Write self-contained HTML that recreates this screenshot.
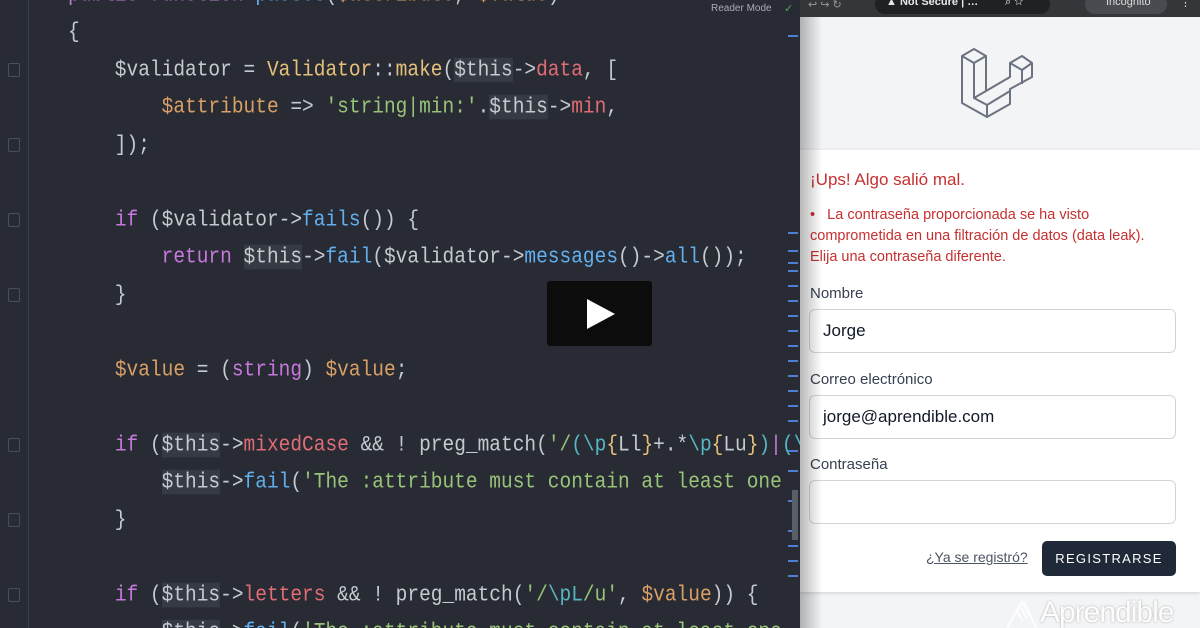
<!DOCTYPE html>
<html><head><meta charset="utf-8"><style>
*{margin:0;padding:0;box-sizing:border-box}
body{width:1200px;height:628px;overflow:hidden;background:#282c34;position:relative;font-family:"Liberation Sans",sans-serif}
.code{position:absolute;left:0;top:0;width:800px;height:628px;background:#282b33;overflow:hidden}
.ln{position:absolute;left:68px;white-space:pre;font-family:"Liberation Mono",monospace;font-size:19.5px;color:#c5c9d0;line-height:24px;transform:scaleY(1.12);transform-origin:0 50%}
.k{color:#c678dd}.f{color:#61afef}.s{color:#98c379}.v{color:#d8a066}.r{color:#e06c75}.y{color:#e5c07b}.c{color:#56b6c2}
.hl{background:#363a43}
.gut{position:absolute;left:28px;top:0;width:1px;height:628px;background:#3a3e47}
.fold{position:absolute;left:8px;width:12px;height:14px;border:1px solid #4a4e57;border-radius:2px;background:#282b33}
.mk{position:absolute;left:788px;width:10px;height:2px;background:#4f7fd6}
.right{position:absolute;left:800px;top:0;width:400px;height:628px;background:#f3f4f6;overflow:hidden}
.tb{position:absolute;left:0;top:0;width:400px;height:17px;background:#35363a;color:#e8e8e8;font-size:11px}
.card{position:absolute;left:0;top:150px;width:400px;height:442px;background:#fff;box-shadow:0 1px 4px rgba(0,0,0,.15)}
.shade{position:absolute;left:0;top:17px;width:22px;height:611px;background:linear-gradient(to right,rgba(0,0,0,.28),rgba(0,0,0,0))}
.lbl{position:absolute;left:10px;font-size:15px;color:#374151}
.inp{position:absolute;left:9px;width:367px;height:44px;border:1px solid #d1d5db;border-radius:6px;background:#fff;font-size:17px;color:#111827;padding:11px 13px}
.err{color:#c53030;position:absolute;left:10px}
</style></head><body>
<div class="code">
<div class="gut"></div>
<div class="fold" style="top:63px"></div>
<div class="fold" style="top:138px"></div>
<div class="fold" style="top:213px"></div>
<div class="fold" style="top:288px"></div>
<div class="fold" style="top:438px"></div>
<div class="fold" style="top:513px"></div>
<div class="fold" style="top:588px"></div>
<div class="ln" style="top:-17px"><span class="k">public function</span> <span class="f">passes</span>(<span class="v">$attribute</span>, <span class="v">$value</span>)</div>
<div class="ln" style="top:20px">{</div>
<div class="ln" style="top:58px">    $validator = <span class="y">Validator</span>::<span class="y">make</span>(<span class="hl">$this</span>-&gt;<span class="r">data</span>, [</div>
<div class="ln" style="top:95px">        <span class="v">$attribute</span> =&gt; <span class="s">'string|min:'</span>.<span class="hl">$this</span>-&gt;<span class="r">min</span>,</div>
<div class="ln" style="top:133px">    ]);</div>
<div class="ln" style="top:208px">    <span class="k">if</span> ($validator-&gt;<span class="f">fails</span>()) {</div>
<div class="ln" style="top:245px">        <span class="k">return</span> <span class="hl">$this</span>-&gt;<span class="f">fail</span>($validator-&gt;<span class="f">messages</span>()-&gt;<span class="f">all</span>());</div>
<div class="ln" style="top:283px">    }</div>
<div class="ln" style="top:358px">    <span class="v">$value</span> = (<span class="k">string</span>) <span class="v">$value</span>;</div>
<div class="ln" style="top:433px">    <span class="k">if</span> (<span class="hl">$this</span>-&gt;<span class="r">mixedCase</span> &amp;&amp; ! preg_match(<span class="s">'/</span><span class="c">(\p</span><span class="y">{</span>Ll<span class="y">}</span>+.*<span class="c">\p</span><span class="y">{</span>Lu<span class="y">}</span><span class="c">)</span><span class="k">|</span><span class="c">(\</span></div>
<div class="ln" style="top:470px">        <span class="hl">$this</span>-&gt;<span class="f">fail</span>(<span class="s">'The :attribute must contain at least one </span></div>
<div class="ln" style="top:508px">    }</div>
<div class="ln" style="top:583px">    <span class="k">if</span> (<span class="hl">$this</span>-&gt;<span class="r">letters</span> &amp;&amp; ! preg_match(<span class="s">'/</span><span class="c">\pL</span><span class="s">/u'</span>, <span class="v">$value</span>)) {</div>
<div class="ln" style="top:620px">        <span class="hl">$this</span>-&gt;<span class="f">fail</span>(<span class="s">'The :attribute must contain at least one</span></div>
<div style="position:absolute;left:711px;top:3px;font-size:10px;color:#aab">Reader Mode</div>
<div style="position:absolute;left:784px;top:2px;font-size:11px;color:#4caf50">✓</div>
<div class="mk" style="top:35px"></div><div class="mk" style="top:232px"></div><div class="mk" style="top:250px"></div>
<div class="mk" style="top:262px"></div><div class="mk" style="top:270px"></div><div class="mk" style="top:285px"></div>
<div class="mk" style="top:300px"></div><div class="mk" style="top:315px"></div><div class="mk" style="top:330px"></div>
<div class="mk" style="top:345px"></div><div class="mk" style="top:360px"></div><div class="mk" style="top:375px"></div>
<div class="mk" style="top:390px"></div><div class="mk" style="top:405px"></div><div class="mk" style="top:420px"></div>
<div class="mk" style="top:450px"></div><div class="mk" style="top:470px"></div><div class="mk" style="top:500px"></div>
<div class="mk" style="top:530px"></div><div class="mk" style="top:545px"></div><div class="mk" style="top:560px"></div>
<div class="mk" style="top:575px"></div>
<div style="position:absolute;left:792px;top:490px;width:6px;height:50px;background:#5a5e66"></div>
</div>
<div style="position:absolute;left:547px;top:281px;width:105px;height:65px;background:#0c0c0d;border-radius:3px"></div>
<svg style="position:absolute;left:585px;top:297px" width="32" height="34"><path d="M2 2 L30 17 L2 32Z" fill="#fff"/></svg>
<div class="right">
<div class="tb">
<span style="position:absolute;left:8px;top:-2px;color:#999">↩ ↪ ↻</span>
<div style="position:absolute;left:75px;top:-6px;width:175px;height:20px;border-radius:10px;background:#202124"></div>
<span style="position:absolute;left:86px;top:-4px;font-weight:bold">▲ Not Secure | …</span>
<span style="position:absolute;left:205px;top:-4px">⌕ ☆</span>
<div style="position:absolute;left:285px;top:-6px;width:82px;height:20px;border-radius:10px;background:#4a4b50"></div>
<span style="position:absolute;left:306px;top:-4px;color:#ddd">Incognito</span>
<span style="position:absolute;left:380px;top:-4px">⋮</span>
</div>
<svg style="position:absolute;left:160px;top:46px" width="74" height="74" viewBox="0 0 74 74" fill="none" stroke="#6b7280" stroke-width="2" stroke-linejoin="round">
<path d="M2 10 L14 3 L26 10 L26 45 L50 31 L50 17 L62 10 L72 17 L72 31 L50 43 L50 58 L27 71 L2 57 Z"/>
<path d="M2 10 L14 17 L26 10 M14 17 L14 52 L27 59 L50 45 M27 59 L27 71 M50 17 L62 24 L72 17 M62 24 L62 38 M14 52 L26 45"/>
</svg>
<div class="card">
<div class="err" style="top:20px;font-size:17px">¡Ups! Algo salió mal.</div>
<div class="err" style="top:55px;font-size:14.5px;line-height:21px;width:350px">•&nbsp;&nbsp; La contraseña proporcionada se ha visto comprometida en una filtración de datos (data leak). Elija una contraseña diferente.</div>
<div class="lbl" style="top:135px">Nombre</div>
<div class="inp" style="top:159px">Jorge</div>
<div class="lbl" style="top:221px">Correo electrónico</div>
<div class="inp" style="top:245px">jorge@aprendible.com</div>
<div class="lbl" style="top:306px">Contraseña</div>
<div class="inp" style="top:330px"></div>
<div style="position:absolute;left:126px;top:399px;font-size:14px;color:#4b5563;text-decoration:underline">¿Ya se registró?</div>
<div style="position:absolute;left:242px;top:391px;width:134px;height:35px;background:#1f2937;border-radius:5px;color:#fff;font-size:13px;letter-spacing:1.3px;text-align:center;line-height:35px">REGISTRARSE</div>
</div>
<svg style="position:absolute;left:205px;top:594px" width="34" height="34" fill="none" stroke="#fff" stroke-width="2" opacity=".85"><path d="M2 34 L17 8 L32 34 M12 17 L18 27 M15 12 L22 25 M19 8 L26 22"/></svg>
<div style="position:absolute;left:240px;top:596px;font-size:30px;color:#fff;opacity:.85;text-shadow:0 0 2px #999;letter-spacing:-1px">Aprendible</div>
<div class="shade"></div>
</div>
</body></html>
